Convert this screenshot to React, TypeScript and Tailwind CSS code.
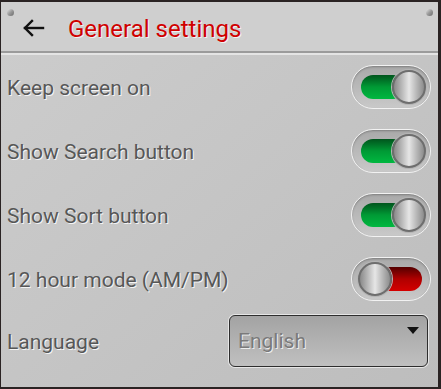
import React from 'react';

interface ToggleProps {
  on: boolean;
}

const Toggle: React.FC<ToggleProps> = ({ on }) => {
  return (
    <div className="relative w-[80px] h-[44px] rounded-full border border-[#f2f2f2] bg-gradient-to-b from-[#a9a9a9] to-[#c9c9c9] shadow-[inset_0_1px_2px_rgba(0,0,0,0.25)]">
      {/* track */}
      {on ? (
        <div className="absolute left-[9px] top-[9px] w-[44px] h-[24px] rounded-full bg-gradient-to-b from-[#00551d] via-[#009a35] to-[#00b840]" />
      ) : (
        <div className="absolute left-[26px] top-[9px] w-[44px] h-[24px] rounded-full bg-gradient-to-b from-[#550000] via-[#b00000] to-[#d40000]" />
      )}
      {/* knob */}
      <div
        className={`absolute top-[4px] w-[34px] h-[34px] rounded-full border-2 border-[#6e6e6e] bg-gradient-to-r from-[#8a8a8a] via-[#e6e6e6] to-[#8c8c8c] shadow-[0_0_0_1px_#b5b5b5] ${
          on ? 'left-[40px]' : 'left-[6px]'
        }`}
      />
    </div>
  );
};

const rows = [
  { label: 'Keep screen on', on: true },
  { label: 'Show Search button', on: true },
  { label: 'Show Sort button', on: true },
  { label: '12 hour mode (AM/PM)', on: false },
];

const labelCls =
  "text-[21px] pt-[4px] text-[#575757] [text-shadow:1px_1px_0_#f4f4f4] font-['Roboto',sans-serif]";

export default function App() {
  return (
    <div className="w-[441px] h-[389px] bg-[#2a2323] pt-[2px] pl-[1px] pr-[3px] pb-[2px] font-['Roboto',sans-serif]">
      <div className="flex flex-col h-full bg-gradient-to-br from-[#cdcdcd] to-[#bdbdbd]">
        {/* header */}
        <div className="relative flex items-center h-[51px] shrink-0 bg-[#cfcfcf] border-b-2 border-[#9b9b9b] rounded-t-[3px]">
          <span className="absolute left-[6px] top-[7px] w-[7px] h-[7px] rounded-full bg-gradient-to-br from-[#e8e8e8] via-[#9a9a9a] to-[#6a6a6a]" />
          <span className="absolute right-[5px] top-[7px] w-[7px] h-[7px] rounded-full bg-gradient-to-br from-[#e8e8e8] via-[#9a9a9a] to-[#6a6a6a]" />
          <div className="w-[67px] flex pl-[20px] mt-[2px]">
            <svg width="24" height="24" viewBox="0 0 24 24" fill="none" stroke="#111" strokeWidth="2.4" strokeLinecap="square">
              <path d="M22 12H4" />
              <path d="M11 5l-7 7 7 7" />
            </svg>
          </div>
          <span className="text-[24px] text-[#d00000] [text-shadow:1px_1px_0_#f2f2f2] leading-none mt-[5px]">General settings</span>
        </div>
        <div className="h-[2px] bg-[#e4e4e4]" />

        {/* rows */}
        <div className="flex flex-col pl-[6px] pr-[7px]">
          {rows.map(r => (
            <div key={r.label} className="flex items-center justify-between h-16">
              <span className={labelCls}>{r.label}</span>
              <Toggle on={r.on} />
            </div>
          ))}
          <div className="flex items-center justify-between h-[60px]">
            <span className={labelCls}>Language</span>
            <div className="relative w-[199px] h-[52px] rounded-[6px] border border-[#2e2e2e] bg-gradient-to-b from-[#a3a3a3] to-[#c0c0c0] shadow-[0_0_0_1px_#e6e6e6] flex items-center pl-[8px] mr-[3px]">
              <span className="text-[21px] text-[#7a7a7a] [text-shadow:1px_1px_0_#ececec] mt-[2px]">English</span>
              <span className="absolute right-[8px] top-[11px] w-0 h-0 border-l-[6px] border-r-[6px] border-t-[7px] border-l-transparent border-r-transparent border-t-[#111]" />
            </div>
          </div>
        </div>
      </div>
    </div>
  );
}
